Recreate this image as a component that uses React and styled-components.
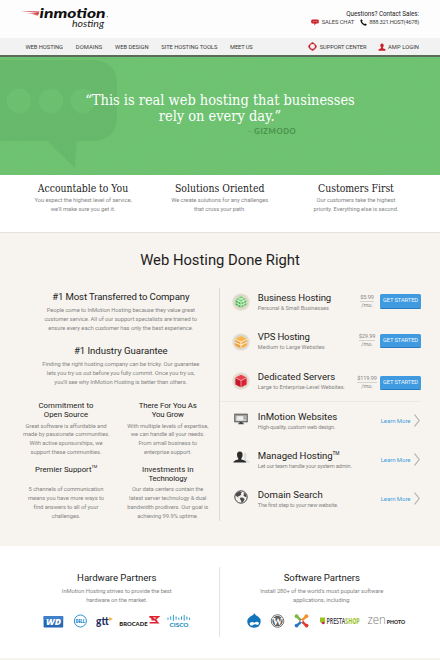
import React from 'react';
import styled, { createGlobalStyle } from 'styled-components';

const Global = createGlobalStyle`
  * { box-sizing: border-box; }
  body { margin: 0; background: #f7f4ef; font-family: Roboto, "Liberation Sans", sans-serif; color: #222; }
  h1, h2, h3, h4, p, ul { margin: 0; padding: 0; font-weight: 400; }
  svg { display: block; flex: none; }
`;

const Page = styled.div`
  width: 440px;
  height: 660px;
  overflow: hidden;
`;

const Line = styled.span`
  display: block;
  white-space: nowrap;
  letter-spacing: ${(p) => (p.$track === undefined ? 'inherit' : `${p.$track}px`)};
`;

/* ---------- header ---------- */
const Header = styled.header`
  height: 38px;
  background: #fdfdfd;
  display: flex;
  justify-content: space-between;
  padding: 0 21px 0 20px;
`;
const Contact = styled.div`
  display: flex;
  flex-direction: column;
  align-items: flex-end;
  padding-top: 9.5px;
  font-size: 6.3px;
  line-height: 8px;
  color: #222;
  letter-spacing: -0.02px;
`;
const ContactRow = styled.div`
  display: flex;
  align-items: center;
  gap: 2.5px;
  font-size: 5.8px;
  line-height: 9px;
  color: #444;
`;
const Gap = styled.i`
  width: ${(p) => p.$w}px;
`;

/* ---------- navigation ---------- */
const Nav = styled.nav`
  height: 19px;
  background: #f2f2f2;
  border-bottom: 2px solid #5a6b5a;
  display: flex;
  align-items: center;
  justify-content: space-between;
  padding: 0 21px 0 25.5px;
  font-size: 5.8px;
  color: #3c3c3c;
`;
const NavGroup = styled.div`
  display: flex;
  align-items: center;
  gap: ${(p) => p.$gap}px;
`;
const NavItem = styled.span`
  display: flex;
  align-items: center;
  gap: 2.5px;
  white-space: nowrap;
  letter-spacing: ${(p) => p.$track}px;
`;

/* ---------- hero ---------- */
const Hero = styled.section`
  position: relative;
  height: 117.5px;
  background: #6ec371;
  padding-top: 35px;
  color: #fff;
`;
const HeroArt = styled.svg`
  position: absolute;
  inset: 0;
`;
const Quote = styled.blockquote`
  position: relative;
  margin: 0;
  text-align: center;
  font: 14.5px/16px "DejaVu Serif Condensed", "DejaVu Serif", serif;
  letter-spacing: -0.03px;
`;
const Source = styled.cite`
  position: relative;
  display: block;
  margin-left: 247.5px;
  font: 900 7.6px/14px Lato, sans-serif;
  letter-spacing: 0.62px;
  color: #4c934f;
`;
const Dash = styled.span`
  font-weight: 400;
  letter-spacing: 0;
  opacity: 0.7;
`;

/* ---------- features ---------- */
const Features = styled.section`
  height: 58px;
  background: #fff;
  border-bottom: 1px solid #e4e0dc;
  padding: 6.5px 15.4px 0 14px;
  display: grid;
  grid-template-columns: 138px 135.4px 137.2px;
  text-align: center;
`;
const SlabTitle = styled.h3`
  font: 10.4px/15px "DejaVu Serif Condensed", "DejaVu Serif", serif;
  letter-spacing: ${(p) => p.$track}px;
  color: #222;
  white-space: nowrap;
`;
const Copy = styled.p`
  font-size: 5.8px;
  line-height: 8.8px;
  letter-spacing: -0.06px;
  color: #858585;
`;

/* ---------- main ---------- */
const Main = styled.section`
  height: 313px;
  background: #f7f4ef;
  padding-top: 17px;
`;
const PageTitle = styled.h1`
  font-size: 14.8px;
  line-height: 20px;
  letter-spacing: -0.01px;
  text-align: center;
  color: #1d1d1d;
`;
const Columns = styled.div`
  display: grid;
  grid-template-columns: 219.5px 1fr;
  margin-top: 13.5px;
`;
const Reasons = styled.div`
  margin-top: 5px;
  height: 233px;
  padding-left: 23px;
  border-right: 1px solid #dcd9d5;
  text-align: center;
`;
const Reason = styled.article`
  height: ${(p) => p.$h}px;
`;
const Title = styled.h3`
  font-size: 9.6px;
  line-height: 18px;
  letter-spacing: ${(p) => p.$track || 0}px;
  color: #222;
  white-space: nowrap;
`;
const MiniGrid = styled.div`
  display: grid;
  grid-template-columns: 86px 1fr;
  column-gap: 17px;
  row-gap: 8px;
  margin-right: 9px;
`;
const MiniTitle = styled.h4`
  font-size: 7.8px;
  line-height: 9px;
  height: 20.5px;
  color: #222;
`;
const Sup = styled.sup`
  font-size: 0.5em;
  line-height: 0;
  letter-spacing: -0.1px;
`;

const Plans = styled.ul`
  list-style: none;
  padding: 0 19px 0 0;
  margin-top: -0.5px;
`;
const Row = styled.li`
  height: ${(p) => p.$h}px;
  display: grid;
  grid-template-columns: 30.3px 1fr auto;
  align-items: center;
  padding-left: 8px;
`;
const IconCell = styled.span`
  display: flex;
  justify-content: center;
  width: 27px;
  padding-bottom: ${(p) => p.$lift || 0}px;
`;
const RowText = styled.div`
  display: flex;
  flex-direction: column;
  padding-top: 0.6px;
`;
const Name = styled.h3`
  font-size: 9.6px;
  line-height: 10px;
  letter-spacing: ${(p) => p.$track || 0}px;
  color: #1d1d1d;
  white-space: nowrap;
`;
const Desc = styled.p`
  font-size: 5.6px;
  line-height: 10px;
  letter-spacing: ${(p) => p.$track || 0}px;
  color: #858585;
  white-space: nowrap;
`;
const Buy = styled.div`
  display: grid;
  grid-template-columns: 20px 41px;
  align-items: center;
  gap: 3px;
  padding: ${(p) => p.$drop || 0}px 0 ${(p) => (p.$drop ? 0 : 2)}px;
`;
const Price = styled.div`
  display: flex;
  flex-direction: column;
  align-items: center;
  font-size: 5.6px;
  line-height: 7px;
  letter-spacing: -0.15px;
  color: #858585;
`;
const Amount = styled.span`
  border-bottom: 1px solid #d5d2ce;
`;
const Button = styled.button`
  height: 14.5px;
  padding: 0;
  border: 0;
  border-bottom: 1px solid #2a7cc0;
  border-radius: 1.5px;
  background: #3f9ae0;
  color: #eef6fd;
  font: 5.8px/13px Roboto, sans-serif;
  letter-spacing: -0.12px;
`;
const Divider = styled.li`
  height: 1px;
  background: #ece8e3;
`;
const More = styled.a`
  display: flex;
  align-items: center;
  gap: 3.5px;
  font-size: 6px;
  letter-spacing: -0.05px;
  color: #3f9fe0;
  padding: 0 1px 2.5px 0;
`;

/* ---------- partners ---------- */
const Partners = styled.section`
  height: 112px;
  background: #fff;
  padding-top: 21px;
  display: grid;
  grid-template-columns: 219.5px 1fr;
`;
const Partner = styled.div`
  height: 70px;
  text-align: center;
  padding: 2.5px ${(p) => (p.$left ? '0 0 15px' : '16px 0 0')};
  border-right: ${(p) => (p.$left ? '1px solid #e3e3e3' : '0')};
`;
const Logos = styled.div`
  display: flex;
  justify-content: center;
  margin-top: 7px;
  padding-left: ${(p) => p.$indent || 0}px;
`;

/* ---------- drawings ---------- */
const BrandLogo = () => (
  <svg width="92" height="38" viewBox="20 0 92 38">
    <path d="M20.5 11.2 L39.5 11.5 L38.8 12.7 Z M27 13 L39 12.9 L38.4 14.1 Z M32 14.4 L38.6 14.3 L38 15.6 Z" fill="#c8202c" />
    <text x="39.6" y="17.5" fontFamily="Lato" fontWeight="900" fontStyle="italic" fontSize="12.6" textLength="66" lengthAdjust="spacingAndGlyphs" fill="#111">inmotion</text>
    <circle cx="107.4" cy="16.6" r="0.7" fill="#777" />
    <text x="72" y="27.4" fontFamily="Lato" fontStyle="italic" fontSize="10.4" textLength="32" lengthAdjust="spacingAndGlyphs" fill="#222">hosting</text>
  </svg>
);
const ChatIcon = () => (
  <svg width="8" height="7" viewBox="0 0 8 7">
    <path d="M1.6 .4h4.8Q7.8 .4 7.8 1.8v1.4Q7.8 4.6 6.4 4.6H5L3.4 6.6V4.6H1.6Q.2 4.6 .2 3.2V1.8Q.2 .4 1.6 .4Z" fill="#c9202b" />
    <path d="M1.8 2.5h1M3.5 2.5h1M5.2 2.5h1" stroke="#fff" strokeWidth=".5" />
  </svg>
);
const PhoneIcon = () => (
  <svg width="7" height="7" viewBox="0 0 7 7">
    <path d="M1.5.2 .4 1Q.3 3.2 2.1 5T6 6.7L6.8 5.6 5.3 4.4 4.4 5Q2.7 4.2 2 2.6L2.7 1.8Z" fill="#111" />
  </svg>
);
const SupportIcon = () => (
  <svg width="9" height="9" viewBox="0 0 9 9">
    <circle cx="4.5" cy="4.5" r="3" fill="none" stroke="#c9202b" strokeWidth="1.1" />
    <path d="M4.5.3v1.5M4.5 7.2v1.5M.3 4.5h1.5M7.2 4.5h1.5" stroke="#c9202b" strokeWidth="1.8" />
  </svg>
);
const UserIcon = () => (
  <svg width="8" height="8" viewBox="0 0 8 8">
    <path d="M4 .4Q5.8.4 5.7 2.4 5.6 3.7 4.9 4.3V5.3L7.4 6.2V7.7H.6V6.2L3.1 5.3V4.3Q2.4 3.7 2.3 2.4 2.2.4 4 .4Z" fill="#c9202b" />
  </svg>
);
const Coin = ({ children }) => (
  <svg width="18" height="18" viewBox="0 0 18 18">
    <circle cx="9" cy="9" r="8.8" fill="#e6dfd3" />
    <circle cx="9" cy="9" r="7.2" fill="#dcd4c5" />
    {children}
  </svg>
);
const GreenCube = () => (
  <Coin>
    <path d="M9 3.2 14.4 5.8V12.2L9 15 3.6 12.2V5.8Z" fill="#e6f4e4" />
    <path d="M9 3.2 11.4 4.4 9 5.6 6.6 4.4Z M6 4.9 8.3 6.1 6 7.3 3.7 6.1Z M12 4.9 14.3 6.1 12 7.3 9.7 6.1Z M9 6.4 11.3 7.6 9 8.8 6.7 7.6Z" fill="#6fce72" />
    <path d="M3.6 7 5.8 8.1V10.3L3.6 9.2Z M6.4 8.4 8.6 9.5V11.7L6.4 10.6Z M3.6 10 5.8 11.1V13.1L3.6 12.1Z M6.4 11.4 8.6 12.5V14.7L6.4 13.6Z" fill="#45b54a" />
    <path d="M14.4 7 12.2 8.1V10.3L14.4 9.2Z M11.6 8.4 9.4 9.5V11.7L11.6 10.6Z M14.4 10 12.2 11.1V13.1L14.4 12.1Z M11.6 11.4 9.4 12.5V14.7L11.6 13.6Z" fill="#5cc360" />
  </Coin>
);
const OrangeCube = () => (
  <Coin>
    <path d="M9 3 14.8 5.9 9 8.7 3.2 5.9Z" fill="#fbb64a" />
    <path d="M3.2 6.8 8.7 9.5V11.5L3.2 8.8Z M3.2 9.9 8.7 12.6V15.2L3.2 12.4Z" fill="#f5a02c" />
    <path d="M14.8 6.8 9.3 9.5V11.5L14.8 8.8Z M14.8 9.9 9.3 12.6V15.2L14.8 12.4Z" fill="#f9ac3c" />
    <path d="M3.2 9.3 9 12.1 14.8 9.3M3.2 6.3 9 9.1 14.8 6.3M9 9V15" stroke="#fff4df" strokeWidth=".7" fill="none" />
  </Coin>
);
const RedCube = () => (
  <Coin>
    <path d="M9 2.8 14.6 5.5 9 8.3 3.4 5.5Z" fill="#ee3f4c" />
    <path d="M3.4 6.1 8.8 8.8V15.2L3.4 12.4Z" fill="#c9152a" />
    <path d="M14.6 6.1 9.2 8.8V15.2L14.6 12.4Z" fill="#dd2036" />
    <path d="M3.4 5.8 9 8.6 14.6 5.8M9 8.6V15" stroke="#f6b9bd" strokeWidth=".4" fill="none" />
  </Coin>
);
const MonitorIcon = () => (
  <svg width="14" height="12" viewBox="0 0 14 12">
    <rect x=".8" y="1.2" width="12.4" height="7.6" fill="#c9c9c7" stroke="#4a4a4a" strokeWidth="1" />
    <rect x="3.2" y="2.8" width="5.8" height="4.6" fill="#eee" />
    <path d="M2 2.6h10M9.8 4h2M9.8 5.5h2" stroke="#777" strokeWidth=".6" />
    <path d="M5.4 9h3.2v1.3h1.2v1H4.2v-1h1.2Z" fill="#444" />
  </svg>
);
const AdminIcon = () => (
  <svg width="18" height="13" viewBox="-1 0 18 13">
    <path d="M11 1.8Q14 1.4 13.6 5 13.4 7 12.6 8L16.6 10.4V11.4H11Z" fill="#dcdedf" />
    <path d="M6.8.6Q9.8.6 9.6 4.2 9.4 6.4 8.3 7.4V8.6Q12.9 9.6 13.3 11.6H.3Q.7 9.6 5.3 8.6V7.4Q4.2 6.4 4 4.2 3.8.6 6.8.6Z" fill="#2c2c2c" />
  </svg>
);
const GlobeIcon = () => (
  <svg width="14" height="14" viewBox="0 0 14 14">
    <circle cx="7" cy="7" r="6.2" fill="#f3f1ee" stroke="#444" strokeWidth="1" />
    <path d="M2 3.2 5.6 1.5 8 2.2 6.8 3.5 7.2 4.8 5 6.2 3.6 6 4.8 7.4 3.4 7.1 1.6 5.6Z M6.6 7.4 9.2 7.8 10.6 9.2 9.4 11.6 7.6 12.8 7 10.4 5.8 8.8Z M9.4 2.5 11.8 4 12.6 6.6 11.2 7 9.4 5.6 10 4.2Z" fill="#4a4a4a" />
  </svg>
);
const Chevron = () => (
  <svg width="6" height="13" viewBox="0 0 6 13">
    <path d="M.6.6 5.2 6.5.6 12.4" fill="none" stroke="#b5b3b0" strokeWidth="1.2" />
  </svg>
);

const HardwareLogos = () => (
  <svg width="150" height="18" viewBox="42 612 150 18">
    <rect x="43.6" y="616" width="19.6" height="11.6" rx=".8" fill="#2768b4" />
    <rect x="43.6" y="616" width="19.6" height="4" rx=".8" fill="#3f80c8" />
    <text x="46" y="624.6" fontFamily="Open Sans" fontWeight="800" fontStyle="italic" fontSize="7.8" textLength="15" lengthAdjust="spacingAndGlyphs" fill="#fff">WD</text>
    <circle cx="80.4" cy="621" r="6" fill="none" stroke="#2a93d5" strokeWidth="1" />
    <text x="75.8" y="622.6" fontFamily="Open Sans" fontWeight="800" fontSize="4.4" textLength="9.2" lengthAdjust="spacingAndGlyphs" fill="#1a86cb">DELL</text>
    <text x="96" y="624.8" fontFamily="Lato" fontWeight="900" fontSize="11" textLength="12.6" lengthAdjust="spacingAndGlyphs" fill="#1d2f66">gtt</text>
    <path d="M109.1 616.9 112.8 619 109.1 621.1Z" fill="#f4b32c" />
    <text x="119.3" y="625.6" fontFamily="Lato" fontWeight="900" fontSize="6.4" textLength="28.2" lengthAdjust="spacingAndGlyphs" fill="#1a1a1a">BROCADE</text>
    <path d="M149.3 616.8H158.4L155 619.8 157.8 622.8H149.6M150.2 617 155 619.8H151.4" fill="none" stroke="#e0202c" strokeWidth="1.5" />
    <path d="M168 618v1.4M170.7 616.8v2.6M173.4 615.4v5M176.1 616.8v2.6M178.8 618v1.4M181.5 616.8v2.6M184.2 615.4v5M186.9 616.8v2.6M189.6 618v1.4" stroke="#2a9bc8" strokeWidth="1" strokeLinecap="round" />
    <text x="169.6" y="627.2" fontFamily="Lato" fontWeight="900" fontSize="5.8" textLength="18.8" lengthAdjust="spacingAndGlyphs" fill="#1b8fc0">CISCO</text>
  </svg>
);
const SoftwareLogos = () => (
  <svg width="162" height="18" viewBox="245 612 162 18">
    <path d="M254.4 613.2Q255.6 615.4 258 616.6 260.8 618.4 260.7 621.8 260.2 627.6 254 627.8 247.6 627.4 247.2 621.6 247.2 618.6 250.4 616.6 253.6 615 254.4 613.2Z" fill="#1275bb" />
    <path d="M249.6 623.4Q251.4 620.8 254.4 622.8 257.4 620.6 259 623 258.6 626 256.2 624.6 254.6 623.8 252.6 625.4 249.8 626.2 249.6 623.4Z" fill="#fff" />
    <circle cx="277.5" cy="621" r="6.3" fill="#fff" stroke="#666" strokeWidth=".9" />
    <circle cx="277.5" cy="621" r="5.2" fill="#5e5e5e" />
    <text x="272.6" y="624.8" fontFamily="Liberation Serif" fontWeight="700" fontSize="10" textLength="10" lengthAdjust="spacingAndGlyphs" fill="#fff">W</text>
    <g fill="none" strokeWidth="2.5" strokeLinecap="round">
      <path d="M296.6 616.4 300 619.4 303 622.4" stroke="#7ab83d" />
      <path d="M306.4 616.4 303 619.4 300 622.4" stroke="#f3922b" />
      <path d="M306.6 625.8 304 623.4 301 620.4" stroke="#e5382c" />
      <path d="M296.6 625.8 299.4 623.4 301.4 621.4" stroke="#2b78c6" />
    </g>
    <path d="M301.5 619.6 303 621 301.5 622.4 300 621Z" fill="#fff" />
    <circle cx="296.6" cy="616.2" r="1.9" fill="#7ab83d" />
    <circle cx="306.4" cy="616.2" r="1.9" fill="#f3922b" />
    <circle cx="306.6" cy="625.6" r="1.9" fill="#e5382c" />
    <circle cx="296.6" cy="625.6" r="1.9" fill="#2b78c6" />
    <path d="M320 617.6H325V623.6H322L320 622Z" fill="#9bc31c" />
    <circle cx="323.2" cy="623" r="1.3" fill="#d6197f" />
    <text x="326.6" y="623.8" fontFamily="Open Sans" fontWeight="600" fontSize="8.2" textLength="33" lengthAdjust="spacingAndGlyphs" fill="#3d3d50">PRESTA<tspan fontWeight="700" fill="#98c11d">SHOP</tspan></text>
    <text x="367.6" y="623.6" fontFamily="Open Sans" fontWeight="300" fontSize="12" textLength="18.2" lengthAdjust="spacingAndGlyphs" fill="#777">zen</text>
    <text x="386.8" y="623.6" fontFamily="Lato" fontWeight="900" fontSize="5.8" textLength="18.2" lengthAdjust="spacingAndGlyphs" fill="#222">PHOTO</text>
  </svg>
);

/* ---------- content ---------- */
const features = [
  { title: 'Accountable to You', track: -0.03, lines: ['You expect the highest level of service,', "we'll make sure you get it."] },
  { title: 'Solutions Oriented', track: 0.02, lines: ['We create solutions for any challenges', 'that cross your path.'] },
  { title: 'Customers First', track: -0.05, lines: ['Our customers take the highest', 'priority. Everything else is second.'] },
];
const reasons = [
  { title: '#1 Most Transferred to Company', track: -0.12, h: 54, lines: ['People come to InMotion Hosting because they value great', 'customer service. All of our support specialists are trained to', 'ensure every each customer has only the best experience.'] },
  { title: '#1 Industry Guarantee', track: -0.04, h: 59, lines: ['Finding the right hosting company can be tricky. Our guarantee', 'lets you try us out before you fully commit. Once you try us,', "you'll see why InMotion Hosting is better than others."] },
];
const minis = [
  { title: [['Commitment to', 0.05], ['Open Source', 0.01]], lines: ['Great software is affordable and', 'made by passionate communities.', 'With active sponsorships, we', 'support these communities.'] },
  { title: [['There For You As', -0.08], ['You Grow', -0.16]], lines: ['With multiple levels of expertise,', 'we can handle all your needs.', 'From small business to', 'enterprise support.'] },
  { title: [['Premier Support', -0.01]], tm: true, lines: ['5 channels of communication', 'means you have more ways to', 'find answers to all of your', 'challenges.'] },
  { title: [['Investments in', 0.05], ['Technology', -0.12]], lines: ['Our data centers contain the', 'latest server technology & dual', 'bandwidth prodivers. Our goal is', 'achieving 99.9% uptime.'] },
];
const plans = [
  { name: 'Business Hosting', nt: -0.08, desc: 'Personal & Small Businesses', dt: -0.04, price: '$5.99', Icon: GreenCube },
  { name: 'VPS Hosting', nt: -0.16, desc: 'Medium to Large Websites', dt: 0.02, price: '$29.99', Icon: OrangeCube },
  { name: 'Dedicated Servers', nt: 0, desc: 'Large to Enterprise-Level Websites.', dt: 0, price: '$119.99', drop: 3, Icon: RedCube },
];
const services = [
  { name: 'InMotion Websites', nt: -0.02, desc: 'High-quality, custom web design.', dt: -0.13, Icon: MonitorIcon },
  { name: 'Managed Hosting', nt: -0.07, tm: true, desc: 'Let our team handle your system admin.', dt: -0.15, Icon: AdminIcon },
  { name: 'Domain Search', nt: 0, desc: 'The first step to your new website.', dt: -0.14, Icon: GlobeIcon },
];
const Lines = ({ of }) => of.map((t) => <Line key={t}>{t}</Line>);

export default function App() {
  return (
    <Page>
      <Global />
      <Header>
        <BrandLogo />
        <Contact>
          <Line>Questions? Contact Sales:</Line>
          <ContactRow>
            <ChatIcon />
            <Line $track={-0.08}>SALES CHAT</Line>
            <Gap $w={0.5} />
            <PhoneIcon />
            <Line $track={-0.27}>888.321.HOST(4678)</Line>
          </ContactRow>
        </Contact>
      </Header>
      <Nav>
        <NavGroup $gap={12.8}>
          <NavItem $track={-0.06}>WEB HOSTING</NavItem>
          <NavItem $track={0.08}>DOMAINS</NavItem>
          <NavItem $track={-0.02}>WEB DESIGN</NavItem>
          <NavItem $track={-0.06}>SITE HOSTING TOOLS</NavItem>
          <NavItem $track={-0.19}>MEET US</NavItem>
        </NavGroup>
        <NavGroup $gap={11}>
          <NavItem $track={-0.09}><SupportIcon />SUPPORT CENTER</NavItem>
          <NavItem $track={0.05}><UserIcon />AMP LOGIN</NavItem>
        </NavGroup>
      </Nav>
      <Hero>
        <HeroArt width="440" height="118" viewBox="0 57 440 118">
          <defs>
            <filter id="grain" x="0" y="0" width="100%" height="100%">
              <feTurbulence type="fractalNoise" baseFrequency="0.45" numOctaves="2" />
              <feColorMatrix values="0 0 0 0 0.15  0 0 0 0 0.4  0 0 0 0 0.15  0.5 0 0 0 -0.18" />
            </filter>
          </defs>
          <path d="M-10 60H94Q117 62 117 84V118Q116 139 94 141H76.5L75 168 47 141H-10Z" fill="#67b96b" />
          <circle cx="19" cy="101" r="12.4" fill="#6cc06f" />
          <circle cx="51" cy="101" r="12.4" fill="#6cc06f" />
          <circle cx="83" cy="101" r="12.4" fill="#6cc06f" />
          <rect x="0" y="57" width="440" height="118" filter="url(#grain)" opacity="0.4" />
        </HeroArt>
        <Quote>
          <Line>“This is real web hosting that businesses</Line>
          <Line>rely on every day.”</Line>
        </Quote>
        <Source><Dash>–</Dash> GIZMODO</Source>
      </Hero>
      <Features>
        {features.map((f) => (
          <div key={f.title}>
            <SlabTitle $track={f.track}>{f.title}</SlabTitle>
            <Copy><Lines of={f.lines} /></Copy>
          </div>
        ))}
      </Features>
      <Main>
        <PageTitle>Web Hosting Done Right</PageTitle>
        <Columns>
          <Reasons>
            {reasons.map((r) => (
              <Reason key={r.title} $h={r.h}>
                <Title $track={r.track}>{r.title}</Title>
                <Copy><Lines of={r.lines} /></Copy>
              </Reason>
            ))}
            <MiniGrid>
              {minis.map((m) => (
                <article key={m.lines[0]}>
                  <MiniTitle>
                    {m.title.map(([t, track]) => (
                      <Line key={t} $track={track}>{t}{m.tm && <Sup>TM</Sup>}</Line>
                    ))}
                  </MiniTitle>
                  <Copy><Lines of={m.lines} /></Copy>
                </article>
              ))}
            </MiniGrid>
          </Reasons>
          <Plans>
            {plans.map(({ name, nt, desc, dt, price, drop, Icon }) => (
              <Row key={name} $h={39.5}>
                <IconCell><Icon /></IconCell>
                <RowText>
                  <Name $track={nt}>{name}</Name>
                  <Desc $track={dt}>{desc}</Desc>
                </RowText>
                <Buy $drop={drop}>
                  <Price><Amount>{price}</Amount><span>/mo.</span></Price>
                  <Button>GET STARTED</Button>
                </Buy>
              </Row>
            ))}
            <Divider />
            {services.map(({ name, nt, tm, desc, dt, Icon }) => (
              <Row key={name} $h={39}>
                <IconCell $lift={6}><Icon /></IconCell>
                <RowText>
                  <Name $track={nt}>{name}{tm && <Sup>TM</Sup>}</Name>
                  <Desc $track={dt}>{desc}</Desc>
                </RowText>
                <More>Learn More<Chevron /></More>
              </Row>
            ))}
          </Plans>
        </Columns>
      </Main>
      <Partners>
        <Partner $left>
          <Title $track={-0.05}>Hardware Partners</Title>
          <Copy><Lines of={['InMotion Hosting strives to provide the best', 'hardware on the market.']} /></Copy>
          <Logos><HardwareLogos /></Logos>
        </Partner>
        <Partner>
          <Title $track={-0.06}>Software Partners</Title>
          <Copy><Lines of={["Install 280+ of the world's most popular software", 'applications, including:']} /></Copy>
          <Logos $indent={8}><SoftwareLogos /></Logos>
        </Partner>
      </Partners>
    </Page>
  );
}
